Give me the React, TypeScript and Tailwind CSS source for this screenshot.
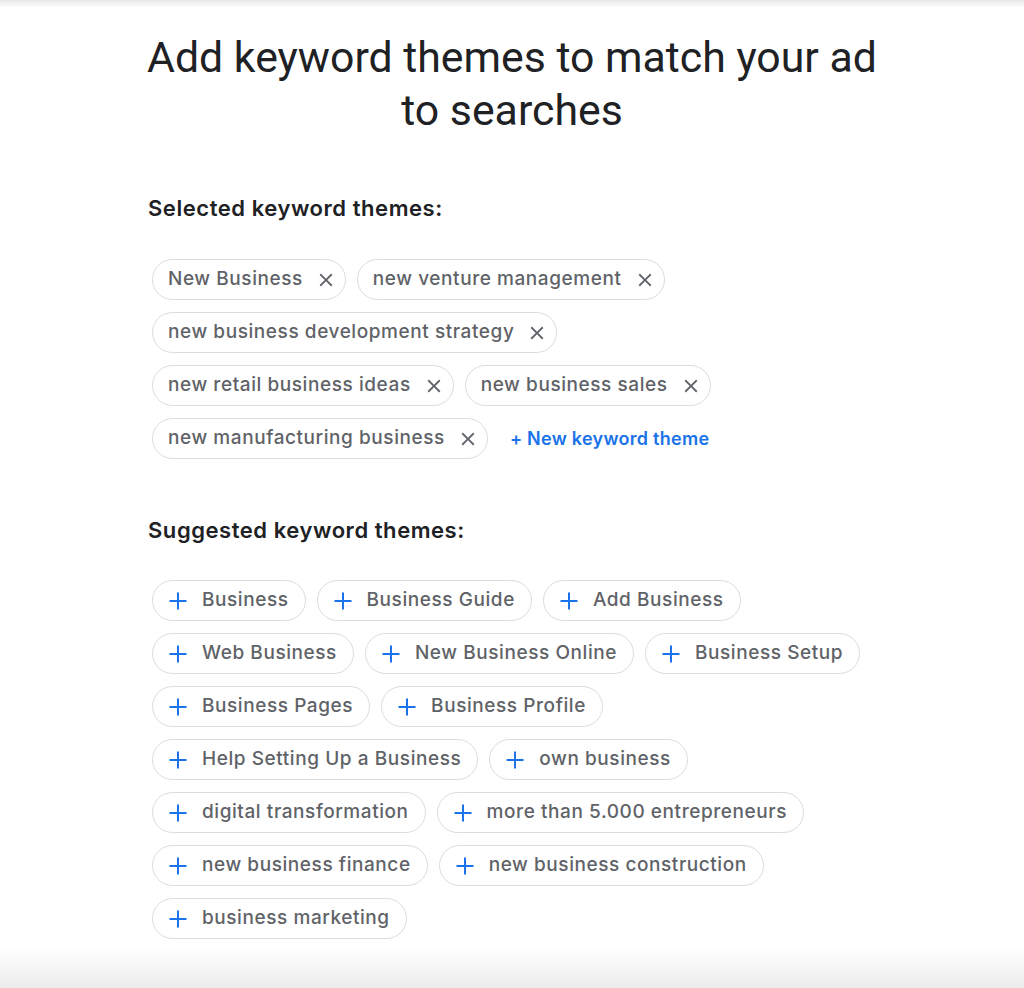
import React from "react";

const selected = [
  "New Business",
  "new venture management",
  "new business development strategy",
  "new retail business ideas",
  "new business sales",
  "new manufacturing business",
];

const suggested = [
  "Business",
  "Business Guide",
  "Add Business",
  "Web Business",
  "New Business Online",
  "Business Setup",
  "Business Pages",
  "Business Profile",
  "Help Setting Up a Business",
  "own business",
  "digital transformation",
  "more than 5.000 entrepreneurs",
  "new business finance",
  "new business construction",
  "business marketing",
];

function CloseIcon() {
  return (
    <svg width="22" height="22" viewBox="0 0 24 24" className="shrink-0" fill="#5f6368">
      <path d="M19 6.41 17.59 5 12 10.59 6.41 5 5 6.41 10.59 12 5 17.59 6.41 19 12 13.41 17.59 19 19 17.59 13.41 12z" />
    </svg>
  );
}

function PlusIcon() {
  return (
    <svg width="18" height="18" viewBox="0 0 18 18" className="shrink-0">
      <path d="M9 0.5v17M0.5 9h17" stroke="#1a73e8" strokeWidth="2" />
    </svg>
  );
}

function SelectedChip({ label }: { label: string }) {
  return (
    <div className="flex h-[41px] items-center gap-3 rounded-full border border-[#dadce0] bg-white pl-[15px] pr-2 text-[19px] font-medium tracking-[0.03em] text-[#5f6368]">
      <span>{label}</span>
      <CloseIcon />
    </div>
  );
}

function SuggestedChip({ label }: { label: string }) {
  return (
    <div className="flex h-[41px] items-center gap-[15px] rounded-full border border-[#dadce0] bg-white pl-4 pr-4 text-[19px] font-medium tracking-[0.03em] text-[#5f6368]">
      <PlusIcon />
      <span>{label}</span>
    </div>
  );
}

export default function App() {
  return (
    <div
      className="flex min-h-[988px] flex-col bg-white"
      style={{ fontFamily: "Inter, Roboto, sans-serif" }}
    >
      <div className="h-[8px] bg-gradient-to-b from-[#e6e8e8] to-white" />
      <div className="mx-auto w-[728px]">
        <h1 className="-mx-6 mt-[23px] text-center font-['Roboto',sans-serif] text-[42.8px] leading-[53px] font-normal text-[#202124]">
          Add keyword themes to match your ad
          <br />
          to searches
        </h1>

        <h2 className="mt-[56px] text-[22px] leading-[30px] font-semibold tracking-[0.025em] text-[#202124]">
          Selected keyword themes:
        </h2>
        <div className="mt-[36px] flex flex-wrap items-center gap-x-[11px] gap-y-3 pr-3 pl-1">
          {selected.map((s) => (
            <SelectedChip key={s} label={s} />
          ))}
          <button className="ml-[11px] text-[18px] font-semibold tracking-[0.015em] text-[#1a73e8]">+ New keyword theme</button>
        </div>

        <h2 className="mt-[56px] text-[22px] leading-[30px] font-semibold tracking-[0.025em] text-[#202124]">
          Suggested keyword themes:
        </h2>
        <div className="mt-[35px] flex flex-wrap items-center gap-x-[11px] gap-y-3 pr-3 pl-1">
          {suggested.map((s) => (
            <SuggestedChip key={s} label={s} />
          ))}
        </div>
      </div>
      <div className="mt-auto h-[40px] bg-gradient-to-b from-white to-[#ececec]" />
    </div>
  );
}
